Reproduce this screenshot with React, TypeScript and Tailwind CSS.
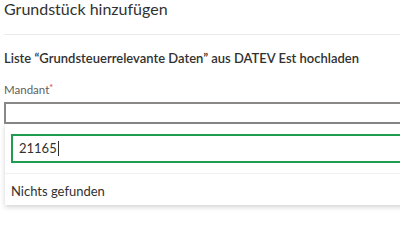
export default function App() {
  return (
    <div
      className="h-[251px] w-[400px] overflow-hidden bg-white pl-[4px] text-[#323130]"
      style={{ fontFamily: 'Lato, "Open Sans", sans-serif' }}
    >
      <h1 className="text-[16px] leading-[18px]">Grundstück hinzufügen</h1>
      <div className="mt-[16px] h-px bg-[#ebebeb]" />
      <h2 className="mt-[15px] text-[13px] font-semibold leading-[17px]">
        Liste “Grundsteuerrelevante Daten” aus DATEV Est hochladen
      </h2>
      <div className="mt-[16px] text-[11.5px] leading-[14px] text-[#605e5c]">
        Mandant<span className="relative -top-[3px] text-[9px] text-[#d13438]">*</span>
      </div>
      <div className="relative mt-[4px]">
        <div className="h-[22px] w-[420px] border-2 border-[#8a8886] bg-white" />
        <div className="absolute left-[1px] top-[22px] w-[420px] bg-white shadow-[0_2px_5px_rgba(0,0,0,0.18)]">
          <div className="px-[6px] pb-[10px] pt-[10px]">
            <div className="flex h-[29px] items-center border-2 border-[#1f9d4f] px-[6px] text-[13px] text-[#323130]">
              21165<span className="ml-px inline-block h-[15px] w-px bg-[#323130]" />
            </div>
          </div>
          <div className="h-px bg-[#f0f0f0]" />
          <div className="px-[6px] pb-[6px] pt-[9px] text-[13px] leading-[16px]">Nichts gefunden</div>
        </div>
      </div>
    </div>
  );
}
